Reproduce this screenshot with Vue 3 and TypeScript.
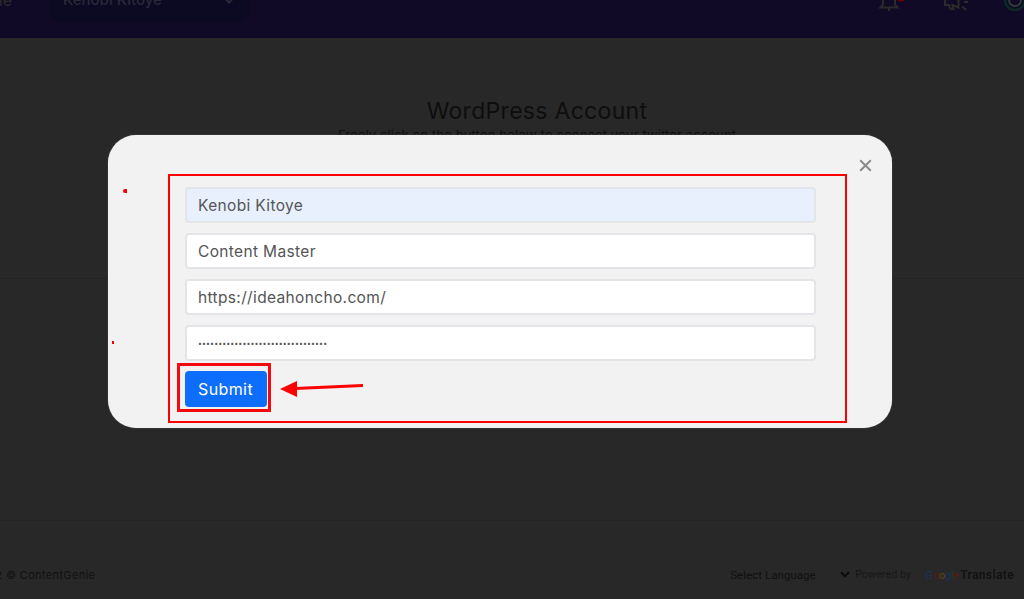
<script setup lang="ts">
const fields: { value: string; type: string; filled?: boolean }[] = [
  { value: 'Kenobi Kitoye', type: 'text', filled: true },
  { value: 'Content Master', type: 'text' },
  { value: 'https://ideahoncho.com/', type: 'text' },
  { value: 'xxxxxxxxxxxxxxxxxxxxxxxxxxxxxxxx', type: 'password' },
]
</script>

<template>
  <div class="page">
    <header class="topbar">
      <span class="brand">Genie</span>
      <div class="account">
        <span class="account-name">Kenobi Kitoye</span>
        <svg width="14" height="8" viewBox="0 0 14 8" fill="none">
          <path d="M1.5 1 7 6.5 12.5 1" stroke="#2a2a38" stroke-width="2" stroke-linecap="round" />
        </svg>
      </div>
      <div class="tools">
        <svg class="tool bell" width="28" height="22" viewBox="0 0 28 22" fill="none">
          <path d="M5 0v4.5L2.5 7.5h17L17 4.5V0M11 8v3" stroke="#2b2b2b" stroke-width="2" />
          <circle cx="23" cy="-3" r="4.5" fill="#6d0404" />
        </svg>
        <svg class="tool horn" width="26" height="22" viewBox="0 0 26 22" fill="none">
          <path d="M2 0v5h4l1.5 4h3l-1-4 6 2.5V0M21 2h4M19 6.5l4 3.5" stroke="#2b2b2b" stroke-width="2" />
        </svg>
        <svg class="tool ring" width="24" height="22" viewBox="0 0 24 22" fill="none">
          <circle cx="12" cy="0" r="10" stroke="#0b2a26" stroke-width="2.5" />
          <circle cx="12" cy="0" r="6" stroke="#2e3b38" stroke-width="2" />
        </svg>
      </div>
    </header>

    <main class="content">
      <div class="intro">
        <h1 class="title">WordPress Account</h1>
        <p class="subtitle">Freely click on the button below to connect your twitter account</p>
      </div>
      <hr class="divider" />
    </main>

    <footer class="footer">
      <span class="copyright">2022 © ContentGenie</span>
      <div class="translate">
        <span class="language">Select Language</span>
        <svg width="10" height="7" viewBox="0 0 10 7" fill="none">
          <path d="M1 1.2 5 5.2l4-4" stroke="#0b0b0b" stroke-width="2" />
        </svg>
        <span class="powered">Powered by</span>
        <span class="google"><i class="g-blue">G</i><i class="g-red">o</i><i class="g-yellow">o</i><i class="g-blue">g</i><i class="g-green">l</i><i class="g-red">e</i></span>
        <span class="translate-word">Translate</span>
      </div>
    </footer>

    <div class="overlay">
      <section class="modal">
        <span class="speck speck-a"></span>
        <span class="speck speck-b"></span>
        <button class="close" type="button" aria-label="Close">
          <svg width="13" height="13" viewBox="0 0 13 13" fill="none">
            <path d="M1.2 1.2 11.8 11.8M11.8 1.2 1.2 11.8" stroke="#8a8a8a" stroke-width="2" />
          </svg>
        </button>
        <form class="form" @submit.prevent>
          <input
            v-for="field in fields"
            :key="field.value"
            class="field"
            :class="{ filled: field.filled, secret: field.type === 'password' }"
            :type="field.type"
            :value="field.value"
            readonly
          />
          <div class="actions">
            <button class="submit" type="submit">Submit</button>
          </div>
        </form>
        <span class="mark-form"></span>
        <span class="mark-button"></span>
        <svg class="arrow" width="90" height="20" viewBox="0 0 90 20" fill="none">
          <path d="M15 9.5 83 6.5" stroke="#f00" stroke-width="3" />
          <path d="M0 10 17 2V18Z" fill="#f00" />
        </svg>
      </section>
    </div>
  </div>
</template>

<style>
html,
body {
  margin: 0;
  padding: 0;
  background: #282828;
}
</style>

<style scoped>
.page {
  position: relative;
  display: flex;
  flex-direction: column;
  width: 1024px;
  height: 599px;
  overflow: hidden;
  background: #282828;
  font-family: Inter, "Open Sans", "Liberation Sans", sans-serif;
}

.topbar {
  flex: none;
  display: flex;
  align-items: flex-end;
  height: 38px;
  background: #100a26;
  overflow: hidden;
}

.brand {
  flex: none;
  box-sizing: border-box;
  width: 102px;
  margin-left: -52px;
  margin-bottom: 28px;
  padding-right: 38px;
  font-size: 16px;
  line-height: 20px;
  color: #2c2c2c;
  text-align: right;
  white-space: nowrap;
}

.account {
  flex: none;
  display: flex;
  align-items: center;
  justify-content: space-between;
  box-sizing: border-box;
  width: 200px;
  height: 40px;
  margin-bottom: 16px;
  padding: 0 14px 4px 13px;
  border-radius: 12px;
  background: #0c0922;
}

.account-name {
  font-size: 15px;
  font-weight: 500;
  line-height: 20px;
  color: #29293a;
}

.tools {
  flex: 1;
  display: flex;
  align-items: flex-end;
  justify-content: flex-end;
  margin-bottom: 16px;
  margin-right: -3px;
}

.tool {
  flex: none;
}

.horn {
  margin-left: 37px;
}

.ring {
  margin-left: 34px;
}

.content {
  flex: 1;
  display: flex;
  flex-direction: column;
}

.intro {
  display: flex;
  flex-direction: column;
  align-items: center;
  height: 240px;
  box-sizing: border-box;
  padding: 60px 0 0 50px;
}

.title {
  margin: 0;
  font-size: 23px;
  font-weight: 400;
  line-height: 26px;
  color: #0e0e0e;
  letter-spacing: 0.3px;
}

.subtitle {
  margin: 2px 0 0;
  font-size: 13px;
  line-height: 18px;
  color: #101010;
  letter-spacing: 0.11px;
}

.divider {
  width: 100%;
  height: 1px;
  margin: 0;
  border: 0;
  background: #232323;
}

.footer {
  flex: none;
  display: flex;
  align-items: center;
  justify-content: space-between;
  box-sizing: border-box;
  height: 79px;
  padding: 29px 10px 0 0;
  border-top: 1px solid #232323;
}

.copyright {
  margin-left: -26px;
  font-size: 11px;
  line-height: 14px;
  color: #111;
  letter-spacing: 0.35px;
  white-space: nowrap;
}

.translate {
  display: flex;
  align-items: center;
  font-family: Roboto, "Liberation Sans", sans-serif;
}

.language {
  width: 110px;
  font-size: 11.6px;
  color: #101010;
}

.powered {
  width: 55px;
  margin: 0 15px 0 5px;
  font-size: 10.8px;
  color: #171717;
  white-space: nowrap;
}

.google {
  width: 32px;
  margin-right: 3px;
  font-family: "Liberation Sans", sans-serif;
  font-size: 10.5px;
  white-space: nowrap;
}

.google i {
  font-style: normal;
}

.g-blue { color: #1c3263; }
.g-red { color: #5e1a14; }
.g-yellow { color: #5e4a0c; }
.g-green { color: #154a22; }

.translate-word {
  font-size: 12px;
  font-weight: 500;
  color: #101010;
  letter-spacing: 0.4px;
}

.overlay {
  position: absolute;
  inset: 0;
  display: flex;
  justify-content: center;
  box-sizing: border-box;
  padding: 135px 24px 0 0;
}

.modal {
  position: relative;
  box-sizing: border-box;
  width: 784px;
  height: 293px;
  padding: 52px 76px 21px 77px;
  border-radius: 28px;
  background: #f2f2f2;
  box-shadow: 0 0 1px #999;
}

.close {
  position: absolute;
  top: 24px;
  right: 20px;
  display: flex;
  padding: 0;
  border: 0;
  background: none;
}

.form {
  display: flex;
  flex-direction: column;
  gap: 10px;
}

.field {
  box-sizing: border-box;
  width: 100%;
  height: 36px;
  padding: 0 11px;
  border: 2px solid #e3e5e8;
  border-radius: 4px;
  background: #fff;
  font: inherit;
  font-size: 15.5px;
  font-weight: 400;
  letter-spacing: 0.35px;
  color: #555;
  outline: none;
}

.field.filled {
  background: #e8f0fe;
}

.field.secret {
  font-size: 7px;
  letter-spacing: 0.1px;
}

.actions {
  display: flex;
}

.submit {
  box-sizing: border-box;
  width: 82px;
  height: 36px;
  padding: 0 1px 0 0;
  border: 0;
  border-radius: 4px;
  background: #0d6efd;
  color: #fff;
  font: inherit;
  font-size: 16px;
  font-weight: 400;
  letter-spacing: 0.4px;
}

.mark-form {
  position: absolute;
  left: 60px;
  top: 39px;
  width: 679px;
  height: 249px;
  box-sizing: border-box;
  border: 2px solid #f00;
  pointer-events: none;
}

.mark-button {
  position: absolute;
  left: 69px;
  top: 228px;
  width: 94px;
  height: 49px;
  box-sizing: border-box;
  border: 3.5px solid #f4090f;
  pointer-events: none;
}

.arrow {
  position: absolute;
  left: 172px;
  top: 244px;
}

.speck {
  position: absolute;
  background: #f00;
}

.speck-a {
  left: 15px;
  top: 54px;
  width: 4px;
  height: 4px;
  border-radius: 2px 0 0 2px;
}

.speck-b {
  left: 4px;
  top: 206px;
  width: 2px;
  height: 3px;
}
</style>
